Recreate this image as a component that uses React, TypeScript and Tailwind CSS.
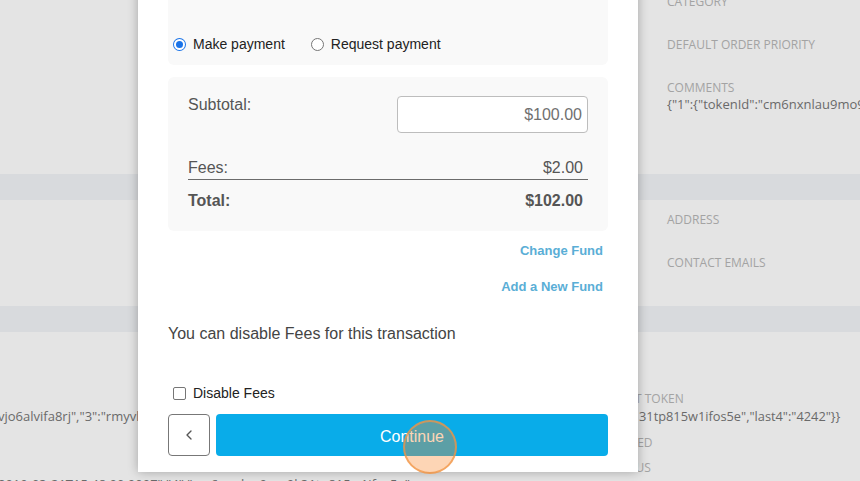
import { ChevronLeft } from 'lucide-react';

const bgFont = { fontFamily: '"Open Sans", "Liberation Sans", sans-serif' };

const Field = ({ label, value, className = '' }: { label: string; value?: string; className?: string }) => (
    <div className={className}>
        <div className="text-[12px] leading-[16px] text-[#a3a3a3] uppercase">{label}</div>
        {value && <div className="text-[13px] leading-[16px] text-[#6a6a6a] whitespace-nowrap">{value}</div>}
    </div>
);

const BackgroundPage = () => (
    <div className="flex flex-col" style={bgFont}>
        {/* Section 1 */}
        <div className="h-[174px] pl-[667px]">
            <Field label="Category" className="-mt-[6px]" />
            <Field label="Default Order Priority" className="mt-[27px]" />
            <Field label="Comments" value={'{"1":{"tokenId":"cm6nxnlau9mo9x7kq'} className="mt-[27px]" />
        </div>
        <div className="h-[26px] bg-[#d8dadd]" />
        {/* Section 2 */}
        <div className="h-[106px] pl-[667px] pt-[12px]">
            <Field label="Address" />
            <Field label="Contact Emails" className="mt-[27px]" />
        </div>
        <div className="h-[26px] bg-[#d8dadd]" />
        {/* Section 3 */}
        <div className="relative h-[149px]">
            <div className="absolute left-[-2px] top-[76px] text-[13px] leading-[16px] text-[#6a6a6a] whitespace-nowrap">
                {'vjo6alvifa8rj","3":"rmyvlq2w8xk0tz"}'}
            </div>
            <div className="absolute left-[-2px] top-[144px] text-[13px] leading-[16px] text-[#6a6a6a] whitespace-nowrap">
                {'2019-03-21T15:48:00.000Z","4":"cm6nxnlau9mo9k31tp815w1ifos5e"'}
            </div>
            <div className="absolute left-[587px] top-[59px]">
                <Field label="Payment Token" />
            </div>
            <div className="absolute left-[639px] top-[76px] text-[12.8px] leading-[16px] text-[#6a6a6a] whitespace-nowrap">
                {'31tp815w1ifos5e","last4":"4242"}}'}
            </div>
            <Field label="Verified" className="absolute left-[603px] top-[103px]" />
            <Field label="Status" className="absolute left-[608px] top-[128px]" />
        </div>
    </div>
);

const Radio = ({ checked, label }: { checked?: boolean; label: string }) => (
    <label className="flex items-center gap-[7px]">
        <span
            className={
                checked
                    ? 'w-[13px] h-[13px] rounded-full bg-[#1a73e8] flex items-center justify-center'
                    : 'w-[13px] h-[13px] rounded-full border border-[#767676] bg-white'
            }
        >
            {checked && <span className="w-[7px] h-[7px] rounded-full bg-[#1a73e8] ring-2 ring-white" />}
        </span>
        <span className="text-[14px] text-[#222]">{label}</span>
    </label>
);

const PaymentModal = () => (
    <div
        className="absolute left-[138px] top-[-40px] w-[500px] bg-white px-[30px] pb-[16px] shadow-[0_0_10px_rgba(0,0,0,0.28)]"
        style={{ fontFamily: '"Liberation Sans", Arial, sans-serif' }}
    >
        {/* Payment type */}
        <div className="h-[105px] bg-[#f9f9f9] rounded-b-[6px] flex items-end pb-[10px] pl-[5px] gap-[26px]">
            <Radio checked label="Make payment" />
            <Radio label="Request payment" />
        </div>

        {/* Totals */}
        <div className="mt-[12px] h-[154px] bg-[#f9f9f9] rounded-[6px] px-[20px] pt-[19px]">
            <div className="flex justify-between items-start">
                <span className="text-[16px] leading-[18px] text-[#555]">Subtotal:</span>
                <div className="w-[191px] h-[37px] bg-white border border-[#bdbdbd] rounded-[4px] flex items-center justify-end pr-[5px] text-[16px] text-[#707070]">
                    $100.00
                </div>
            </div>
            <div className="mt-[26px] flex justify-between items-end border-b border-[#6b6b6b] pb-[2px] text-[16px] leading-[18px] text-[#555]">
                <span>Fees:</span>
                <span className="pr-[5px]">$2.00</span>
            </div>
            <div className="mt-[12px] flex justify-between text-[16px] leading-[18px] font-bold text-[#555]">
                <span>Total:</span>
                <span className="pr-[5px]">$102.00</span>
            </div>
        </div>

        {/* Fund links */}
        <div className="flex flex-col items-end pr-[5px] text-[13px] leading-[16px] font-bold text-[#5aaed6]">
            <a className="mt-[12px]">Change Fund</a>
            <a className="mt-[20px]">Add a New Fund</a>
        </div>

        <p className="mt-[30px] text-[16px] leading-[18px] text-[#444]">You can disable Fees for this transaction</p>

        <label className="mt-[42px] flex items-center gap-[7px] pl-[5px]">
            <span className="w-[13px] h-[13px] rounded-[2px] border border-[#767676] bg-white" />
            <span className="text-[14px] leading-[16px] text-[#222]">Disable Fees</span>
        </label>

        <div className="mt-[13px] flex gap-[6px]">
            <button className="w-[42px] h-[42px] border border-[#777] rounded-[4px] flex items-center justify-center text-[#555]">
                <ChevronLeft size={16} strokeWidth={2} />
            </button>
            <button className="relative flex-1 h-[42px] rounded-[4px] bg-[#09ace9] text-white text-[16px] pt-[3px]">
                Continue
                <span className="absolute left-[187px] top-[6px] w-[54px] h-[54px] rounded-full bg-[rgba(249,135,44,0.35)] border-2 border-[rgba(240,150,70,0.75)]" />
            </button>
        </div>
    </div>
);

export default function App() {
    return (
        <div className="relative w-[860px] h-[481px] overflow-hidden bg-[#e4e4e4]">
            <BackgroundPage />
            <PaymentModal />
        </div>
    );
}
